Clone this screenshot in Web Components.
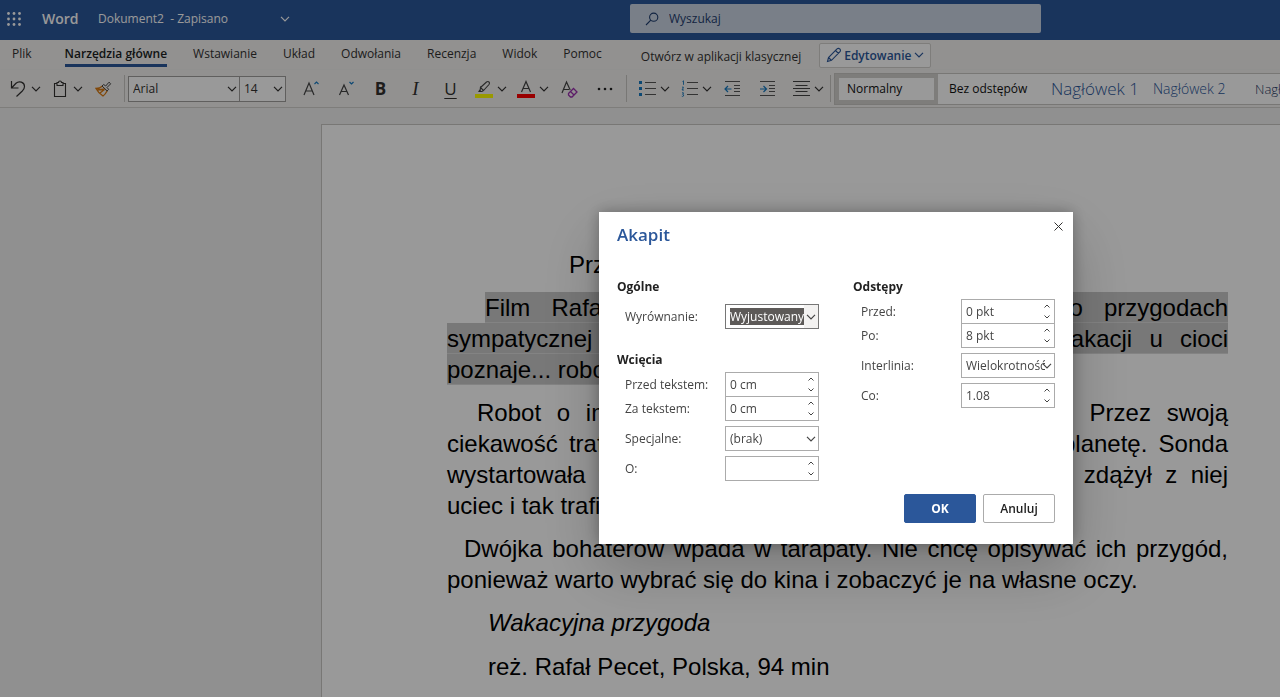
<!DOCTYPE html>
<html lang="pl">
<head>
<meta charset="utf-8">
<title>Dokument2 - Word</title>
<style>
  :root {
    --brand: #2b579a;
    --ribbon: #f3f2f1;
    --ink: #323130;
    --ui: "Open Sans", "Noto Sans", sans-serif;
  }

  body {
    margin: 0;
    height: 100vh;
    overflow: hidden;
    font-family: var(--ui);
    font-size: 12px;
    color: var(--ink);
  }
</style>
</head>
<body>
<word-app>
  <title-bar></title-bar>
  <ribbon-tabs></ribbon-tabs>
  <ribbon-toolbar></ribbon-toolbar>
  <document-page></document-page>
</word-app>
<paragraph-dialog></paragraph-dialog>

<script>
const ICONS = {
  chevron: '<svg width="10" height="6" viewBox="0 0 10 6"><path d="M1 .8l4 4 4-4" fill="none" stroke="currentColor" stroke-width="1.2"/></svg>',
  waffle: '<svg width="16" height="16" viewBox="0 0 16 16" fill="currentColor"><circle cx="2.5" cy="2.5" r="1.4"/><circle cx="8" cy="2.5" r="1.4"/><circle cx="13.5" cy="2.5" r="1.4"/><circle cx="2.5" cy="8" r="1.4"/><circle cx="8" cy="8" r="1.4"/><circle cx="13.5" cy="8" r="1.4"/><circle cx="2.5" cy="13.5" r="1.4"/><circle cx="8" cy="13.5" r="1.4"/><circle cx="13.5" cy="13.5" r="1.4"/></svg>',
  search: '<svg width="14" height="14" viewBox="0 0 14 14"><g fill="none" stroke="currentColor" stroke-width="1.1"><circle cx="8.7" cy="5.2" r="4.1"/><path d="M5.8 8.2L1 13"/></g></svg>',
  pencil: '<svg width="16" height="16" viewBox="0 0 16 16"><path d="M1.5 14.5l1-4L11 2a1.8 1.8 0 0 1 2.8 0 1.8 1.8 0 0 1 0 2.8L5.5 13.3zM2.5 10.5l3 3M9.5 3.5l3 3" fill="none" stroke="currentColor" stroke-width="1.1"/></svg>',
  undo: '<svg width="16" height="18" viewBox="0 0 16 18"><path d="M1.5 1v7h7M1.5 8L6 3.300C9 .5 14.500 2 14.500 6.500c0 2.200-1 3.200-2.200 4.500L6.500 16.500" fill="none" stroke="currentColor" stroke-width="1.2"/></svg>',
  paste: '<svg width="14" height="18" viewBox="0 0 14 18"><path d="M4 3.500H1.500v13h11v-13H10M4 5.500v-3h1.500a1.500 1.500 0 0 1 3 0H10v3z" fill="none" stroke="currentColor" stroke-width="1.1"/></svg>',
  brush: '<svg width="17" height="16" viewBox="0 0 17 16"><path d="M1 7.500C4 7.500 6 6.500 7.500 5l4.700 4.700C11 12 9.500 14 8 15 5 13 2.500 10.500 1 7.500zM2.500 9l7-1M5 12l4.500-3.500" fill="none" stroke="#d8780f" stroke-width="1.300"/><path d="M7 5l1.700-1.500 2 1.500L14 1.200l1.700 1.600L12 6.500l1.600 1.800-1.400 1.600z" fill="#f3f2f1" stroke="#444" stroke-width="1"/></svg>',
  grow: '<svg width="18" height="18" viewBox="0 0 18 18"><path d="M2 15L7 3l5 12M3.800 11h6.400" fill="none" stroke="#444" stroke-width="1.200"/><path d="M12.500 4l2-2 2 2" fill="none" stroke="#1478c0" stroke-width="1.100"/></svg>',
  shrink: '<svg width="18" height="18" viewBox="0 0 18 18"><path d="M2.500 15L7 5 11.500 15M4.200 11.500h5.600" fill="none" stroke="#444" stroke-width="1.200"/><path d="M12.500 2l2 2 2-2" fill="none" stroke="#1478c0" stroke-width="1.200"/></svg>',
  highlight: '<svg width="18" height="18" viewBox="0 0 18 18"><path d="M0 14h18v4H0z" fill="#ffff00"/><path d="M5.500 7.500l6-5.500q1.500-1 2.500 0t0 2.500L8.500 10.500zM5.500 7.500l3 3-1.500 1H5z" fill="none" stroke="#444" stroke-width="1.100"/><path d="M4.500 9.500L7 12H3z" fill="#444"/></svg>',
  fontcolor: '<svg width="18" height="18" viewBox="0 0 18 18"><path d="M0 14h18v4H0z" fill="#f00"/><path d="M4.500 12L9 1.500 13.500 12M6 8.500h6" fill="none" stroke="#444" stroke-width="1.200"/></svg>',
  clear: '<svg width="17" height="18" viewBox="0 0 17 18"><path d="M1 13L5.500 2l3.700 8M2.600 9.500H8" fill="none" stroke="#444" stroke-width="1.200"/><path d="M7.500 13.500l5-5 3.500 3.500-5 5H9.500l-2-2zM9.500 11.500l3.500 3.500" fill="none" stroke="#9b2fae" stroke-width="1.300"/></svg>',
  more: '<svg width="16" height="4" viewBox="0 0 16 4" fill="#222"><circle cx="2" cy="2" r="1.300"/><circle cx="8" cy="2" r="1.300"/><circle cx="14" cy="2" r="1.300"/></svg>',
  bullets: '<svg width="17" height="16" viewBox="0 0 17 16"><path d="M0 0h3v3H0zM0 6h3v3H0zM0 12h3v3H0z" fill="#1478c0"/><path d="M6 1.500h11M6 7.500h11M6 13.500h11" stroke="#555" stroke-width="1.100"/></svg>',
  numbers: '<svg width="17" height="18" viewBox="0 0 17 18"><path d="M1.500 1.500l1-.7v4M1 7.500q1.500-1.300 1.500 0l-1.500 2.500h2M1 12.800q2-.5 1.500.8l-1 .6q1.700.3 1 1.800-.8.800-1.700.2" fill="none" stroke="#1478c0" stroke-width=".9"/><path d="M6 2.500h11M6 8.500h11M6 14.500h11" stroke="#555" stroke-width="1.100"/></svg>',
  outdent: '<svg width="17" height="16" viewBox="0 0 17 16"><path d="M1 .5h15M10 4.500h6M10 7.500h6M10 10.500h6M1 14.500h15" stroke="#555" stroke-width="1.100"/><path d="M7.500 8H1.500M4 5L1 8l3 3" fill="none" stroke="#1478c0" stroke-width="1.200"/></svg>',
  indent: '<svg width="17" height="16" viewBox="0 0 17 16"><path d="M1 .5h15M10 4.500h6M10 7.500h6M10 10.500h6M1 14.500h15" stroke="#555" stroke-width="1.100"/><path d="M1 8h6M4.500 5l3 3-3 3" fill="none" stroke="#1478c0" stroke-width="1.200"/></svg>',
  align: '<svg width="17" height="16" viewBox="0 0 17 16"><path d="M0 .5h17M2.500 4.500h12M0 7.500h17M2.500 10.500h12M0 14.500h17" stroke="#444" stroke-width="1.100"/></svg>',
  up: '<svg width="6" height="4" viewBox="0 0 6 4"><path d="M.5 3.500L3 1l2.500 2.500" fill="none" stroke="currentColor"/></svg>',
  down: '<svg width="6" height="4" viewBox="0 0 6 4"><path d="M.5 .5L3 3 5.500 .5" fill="none" stroke="currentColor"/></svg>',
  close: '<svg width="9" height="9" viewBox="0 0 9 9"><path d="M.5 .5l8 8M8.500 .5l-8 8" fill="none" stroke="currentColor"/></svg>',
};

const RESET = `
  * { box-sizing: border-box; }
  button, input, select { font: inherit; color: inherit; margin: 0; padding: 0; border: 0; background: none; border-radius: 0; }
  svg { display: block; }
`;

class WordApp extends HTMLElement {
  constructor() {
    super();
    this.attachShadow({ mode: 'open' }).innerHTML = `
      <style>
        :host { display: flex; flex-direction: column; height: 100vh; background: var(--ribbon); }
      </style>
      <slot></slot>
    `;
  }
}
customElements.define('word-app', WordApp);

class TitleBar extends HTMLElement {
  constructor() {
    super();
    this.attachShadow({ mode: 'open' }).innerHTML = `
      <style>
        ${RESET}
        :host { display: flex; align-items: center; height: 40px; flex: none; background: var(--brand); color: #fff; }
        .left { display: flex; align-items: center; width: 630px; flex: none; padding: 0 0 3px 6px; }
        .brand { margin-left: 20px; width: 56px; font-size: 14px; font-weight: 600; }
        .doc { display: flex; align-items: center; justify-content: space-between; width: 192px; white-space: pre; }
        .search { display: flex; align-items: center; gap: 10px; flex: 0 1 411px; height: 29px; margin-bottom: 3px; padding: 0 15px; border-radius: 2px; background: #cad4e3; color: #1e3c6e; }
        .search input { flex: 1; min-width: 0; outline: none; }
        .search input::placeholder { color: inherit; opacity: 1; }
      </style>
      <div class="left">
        <button aria-label="Aplikacje">${ICONS.waffle}</button>
        <span class="brand">Word</span>
        <button class="doc"><span>Dokument2  - Zapisano</span>${ICONS.chevron}</button>
      </div>
      <div class="search">
        ${ICONS.search}
        <input type="text" placeholder="Wyszukaj" aria-label="Wyszukaj">
      </div>
    `;
  }
}
customElements.define('title-bar', TitleBar);

class RibbonTabs extends HTMLElement {
  constructor() {
    super();
    this.attachShadow({ mode: 'open' }).innerHTML = `
      <style>
        ${RESET}
        :host { display: flex; align-items: center; height: 30px; flex: none; padding-left: 12px; white-space: nowrap; }
        nav { display: flex; gap: 26px; height: 30px; }
        nav button { height: 27px; padding-top: 2px; border-bottom: 3px solid transparent; }
        nav .file { margin-right: 7px; }
        nav .active { border-color: var(--brand); font-weight: 600; color: #201f1e; }
        .open { margin-left: 39px; margin-top: 3px; }
        .mode { display: flex; align-items: center; gap: 2px; height: 25px; margin-left: 18px; padding: 0 6px; background: #fff; border: 1px solid #d2d0ce; border-radius: 2px; color: var(--brand); font-weight: 600; }
      </style>
      <nav>
        <button class="file">Plik</button>
        <button class="active">Narzędzia główne</button>
        <button>Wstawianie</button>
        <button>Układ</button>
        <button>Odwołania</button>
        <button>Recenzja</button>
        <button>Widok</button>
        <button>Pomoc</button>
      </nav>
      <button class="open">Otwórz w aplikacji klasycznej</button>
      <button class="mode">${ICONS.pencil}<span>Edytowanie</span>${ICONS.chevron}</button>
    `;
  }
}
customElements.define('ribbon-tabs', RibbonTabs);

// <tool-button icon="..." label="..." split> draws an icon or the slotted letter
class ToolButton extends HTMLElement {
  connectedCallback() {
    const icon = ICONS[this.getAttribute('icon')] || '<slot></slot>';
    const label = this.getAttribute('label');
    this.attachShadow({ mode: 'open' }).innerHTML = `
      <style>
        ${RESET}
        :host { display: flex; flex: none; width: 35px; height: 30px; }
        :host([split]) { width: 42px; }
        button { display: flex; align-items: center; justify-content: center; flex: 1; }
        :host([split]) .main { flex: none; width: 26px; padding-left: 6px; }
      </style>
      <button class="main" aria-label="${label}">${icon}</button>
      ${this.hasAttribute('split') ? `<button aria-label="${label} – opcje">${ICONS.chevron}</button>` : ''}
    `;
  }
}
customElements.define('tool-button', ToolButton);

class RibbonToolbar extends HTMLElement {
  constructor() {
    super();
    this.attachShadow({ mode: 'open' }).innerHTML = `
      <style>
        ${RESET}
        :host { display: flex; align-items: center; height: 37px; flex: none; padding-left: 2px; overflow: hidden; border-bottom: 1px solid #d2d0ce; box-shadow: 0 1px 2px rgba(0, 0, 0, 0.12); white-space: nowrap; }
        .sep { width: 1px; height: 27px; flex: none; margin: 0 4px; background: #c8c6c4; }
        .tight { margin: 0 3px; }
        .fonts { display: flex; flex: none; height: 26px; margin-right: 7px; border: 1px solid #a19f9d; background: #fff; }
        .combo { display: grid; align-items: center; }
        .combo + .combo { border-left: 1px solid #a19f9d; }
        .combo > * { grid-area: 1 / 1; }
        .combo svg { justify-self: end; margin-right: 2px; pointer-events: none; }
        select { appearance: none; height: 24px; padding: 0 14px 0 4px; outline: none; }
        .family { width: 110px; }
        .size { width: 45px; }
        b, i, u { font-size: 17px; }
        i { font-family: "Liberation Serif", serif; font-size: 19px; }
        u { text-underline-offset: 3px; text-decoration-thickness: 1px; }
        .styles { display: flex; align-items: center; height: 32px; flex: 1; min-width: 0; overflow: hidden; border: 1px solid #c8c6c4; border-right: 0; background: #fff; }
        .styles button { flex: none; height: 30px; text-align: left; color: #111; }
        .styles .normal { width: 103px; border: 4px solid #d2d0ce; padding-left: 8px; }
        .plain { width: 113px; padding-left: 11px; }
        .styles .h1 { width: 102px; font-size: 17px; font-weight: 300; color: var(--brand); }
        .styles .h2 { width: 102px; font-size: 14px; font-weight: 300; color: var(--brand); }
        .styles .h3 { font-size: 13px; font-weight: 300; color: #1f3763; }
      </style>
      <tool-button split icon="undo" label="Cofnij"></tool-button>
      <tool-button split icon="paste" label="Wklej"></tool-button>
      <tool-button icon="brush" label="Malarz formatów"></tool-button>
      <div class="sep tight"></div>
      <div class="fonts">
        <div class="combo">
          <select class="family" aria-label="Czcionka"><option>Arial</option></select>
          ${ICONS.chevron}
        </div>
        <div class="combo">
          <select class="size" aria-label="Rozmiar czcionki"><option>14</option></select>
          ${ICONS.chevron}
        </div>
      </div>
      <tool-button icon="grow" label="Zwiększ czcionkę"></tool-button>
      <tool-button icon="shrink" label="Zmniejsz czcionkę"></tool-button>
      <tool-button label="Pogrubienie"><b>B</b></tool-button>
      <tool-button label="Kursywa"><i>I</i></tool-button>
      <tool-button label="Podkreślenie"><u>U</u></tool-button>
      <tool-button split icon="highlight" label="Wyróżnienie"></tool-button>
      <tool-button split icon="fontcolor" label="Kolor czcionki"></tool-button>
      <tool-button icon="clear" label="Wyczyść formatowanie"></tool-button>
      <tool-button icon="more" label="Więcej"></tool-button>
      <div class="sep"></div>
      <tool-button split icon="bullets" label="Punktory"></tool-button>
      <tool-button split icon="numbers" label="Numerowanie"></tool-button>
      <tool-button icon="outdent" label="Zmniejsz wcięcie"></tool-button>
      <tool-button icon="indent" label="Zwiększ wcięcie"></tool-button>
      <tool-button split icon="align" label="Wyrównanie"></tool-button>
      <div class="sep tight"></div>
      <div class="styles">
        <button class="normal">Normalny</button>
        <button class="plain">Bez odstępów</button>
        <button class="h1">Nagłówek 1</button>
        <button class="h2">Nagłówek 2</button>
        <button class="h3">Nagłówek 3</button>
      </div>
    `;
  }
}
customElements.define('ribbon-toolbar', RibbonToolbar);

class DocumentPage extends HTMLElement {
  constructor() {
    super();
    this.attachShadow({ mode: 'open' }).innerHTML = `
      <style>
        ${RESET}
        :host { display: block; flex: 1; min-height: 0; overflow: hidden; padding: 16px 0 0 321px; background: #f0f0f0; }
        article { width: 1032px; min-height: 1460px; padding: 124px 124px 124px 125px; background: #fff; border: 1px solid #c8c6c4; color: #000; font-family: "Liberation Sans", Arial, sans-serif; font-size: 24px; line-height: 31px; }
        p { margin: 0 0 12px; }
        .line { display: block; text-align: justify; text-align-last: justify; }
        .last { width: fit-content; text-align-last: left; }
        .selected .line { background: #c8c8c8; border-bottom: 1px solid #dadada; height: 31px; }
        .title { padding-left: 122px; }
        .selected .line:first-child { margin-left: 38px; }
        .robot .line:first-child { margin-left: 30px; }
        .duo .line:first-child { margin-left: 17px; }
        .credits { margin-bottom: 13px; padding-left: 41px; }
      </style>
      <article>
        <p class="title">Przygoda na wakacjach</p>
        <p class="selected">
          <span class="line">Film Rafała Peceta opowiada młodym widzom o przygodach</span>
          <span class="line">sympatycznej dziewczynki, która podczas gorących wakacji u cioci</span>
          <span class="line last">poznaje... robota z kosmosu.</span>
        </p>
        <p class="robot">
          <span class="line">Robot o imieniu Tito przyleciał z odległej galaktyki. Przez swoją</span>
          <span class="line">ciekawość trafił przypadkiem na naszą piękną błękitną planetę. Sonda</span>
          <span class="line">wystartowała tak gwałtownie, że biedny mały robot nie zdążył z niej</span>
          <span class="line last">uciec i tak trafił do domu cioci.</span>
        </p>
        <p class="duo">
          <span class="line">Dwójka bohaterów wpada w tarapaty. Nie chcę opisywać ich przygód,</span>
          <span class="line last">ponieważ warto wybrać się do kina i zobaczyć je na własne oczy.</span>
        </p>
        <p class="credits"><em>Wakacyjna przygoda</em></p>
        <p class="credits">reż. Rafał Pecet, Polska, 94 min</p>
      </article>
    `;
  }
}
customElements.define('document-page', DocumentPage);

// <dialog-field label="..." value="..." kind="spin|select">
class DialogField extends HTMLElement {
  connectedCallback() {
    const label = this.getAttribute('label');
    const value = this.getAttribute('value') || '';
    const control = this.getAttribute('kind') === 'select'
      ? `<select id="control"><option>${value}</option></select><span class="arrow">${ICONS.chevron}</span>`
      : `<input id="control" type="text" value="${value}">
         <span class="spin">
           <button aria-label="Zwiększ">${ICONS.up}</button>
           <button aria-label="Zmniejsz">${ICONS.down}</button>
         </span>`;

    this.attachShadow({ mode: 'open' }).innerHTML = `
      <style>
        ${RESET}
        :host { display: flex; align-items: center; justify-content: space-between; padding-left: 8px; color: #444; }
        .box { display: grid; align-items: center; width: 94px; height: 25px; border: 1px solid #ababab; background: #fff; }
        .box > * { grid-area: 1 / 1; min-width: 0; }
        input, select { width: 100%; height: 23px; padding: 0 16px 0 4px; outline: none; }
        select { appearance: none; padding: 3px 9px 3px 4px; }
        .spin { justify-self: end; display: flex; flex-direction: column; }
        .spin button { display: flex; align-items: center; justify-content: center; width: 14px; height: 11px; }
        .arrow { justify-self: end; display: flex; align-items: center; height: 23px; padding: 0 2px; pointer-events: none; }
        :host([focused]) .box { border-color: #767676; }
        :host([focused]) select { padding-right: 14px; background: #5d5a58 content-box; color: #fff; }
        :host([focused]) .arrow { background: #f3f2f1; }
      </style>
      <label for="control">${label}</label>
      <div class="box">${control}</div>
    `;
  }
}
customElements.define('dialog-field', DialogField);

class ParagraphDialog extends HTMLElement {
  constructor() {
    super();
    this.attachShadow({ mode: 'open' }).innerHTML = `
      <style>
        ${RESET}
        :host { position: fixed; inset: 0; background: rgba(0, 0, 0, 0.4); }
        .dialog { position: absolute; left: 599px; top: 212px; width: 474px; padding: 0 18px 21px; background: #fff; box-shadow: 0 25px 58px rgba(0, 0, 0, 0.22), 0 0 14px rgba(0, 0, 0, 0.3); }
        header { display: flex; align-items: flex-start; justify-content: space-between; height: 65px; margin-right: -8px; padding-top: 10px; }
        h1 { margin: 0; font-size: 17px; line-height: 26px; font-weight: 600; color: var(--brand); }
        .close { width: 9px; height: 9px; }
        .columns { display: grid; grid-template-columns: 1fr 1fr; gap: 34px; }
        h2 { margin: 0 0 2px; font-size: 12px; line-height: 20px; font-weight: 700; color: #222; }
        .column { display: flex; flex-direction: column; }
        .general { margin: 5px 0 21px; }
        .joined { margin-top: -1px; }
        .spaced { margin-top: 5px; }
        footer { display: flex; justify-content: flex-end; gap: 7px; margin-top: 13px; }
        footer button { width: 72px; height: 29px; border: 1px solid #ababab; border-radius: 2px; font-weight: 600; color: #222; }
        footer .ok { background: var(--brand); border-color: var(--brand); color: #fff; font-weight: 700; }
      </style>
      <div class="dialog" role="dialog" aria-modal="true" aria-labelledby="heading">
        <header>
          <h1 id="heading">Akapit</h1>
          <button class="close" aria-label="Zamknij">${ICONS.close}</button>
        </header>
        <div class="columns">
          <div class="column">
            <h2>Ogólne</h2>
            <dialog-field class="general" focused kind="select" label="Wyrównanie:" value="Wyjustowany"></dialog-field>
            <h2>Wcięcia</h2>
            <dialog-field kind="spin" label="Przed tekstem:" value="0 cm"></dialog-field>
            <dialog-field class="joined" kind="spin" label="Za tekstem:" value="0 cm"></dialog-field>
            <dialog-field class="spaced" kind="select" label="Specjalne:" value="(brak)"></dialog-field>
            <dialog-field class="spaced" kind="spin" label="O:"></dialog-field>
          </div>
          <div class="column">
            <h2>Odstępy</h2>
            <dialog-field kind="spin" label="Przed:" value="0 pkt"></dialog-field>
            <dialog-field class="joined" kind="spin" label="Po:" value="8 pkt"></dialog-field>
            <dialog-field class="spaced" kind="select" label="Interlinia:" value="Wielokrotność"></dialog-field>
            <dialog-field class="spaced" kind="spin" label="Co:" value="1.08"></dialog-field>
          </div>
        </div>
        <footer>
          <button class="ok">OK</button>
          <button>Anuluj</button>
        </footer>
      </div>
    `;
  }
}
customElements.define('paragraph-dialog', ParagraphDialog);
</script>
</body>
</html>
